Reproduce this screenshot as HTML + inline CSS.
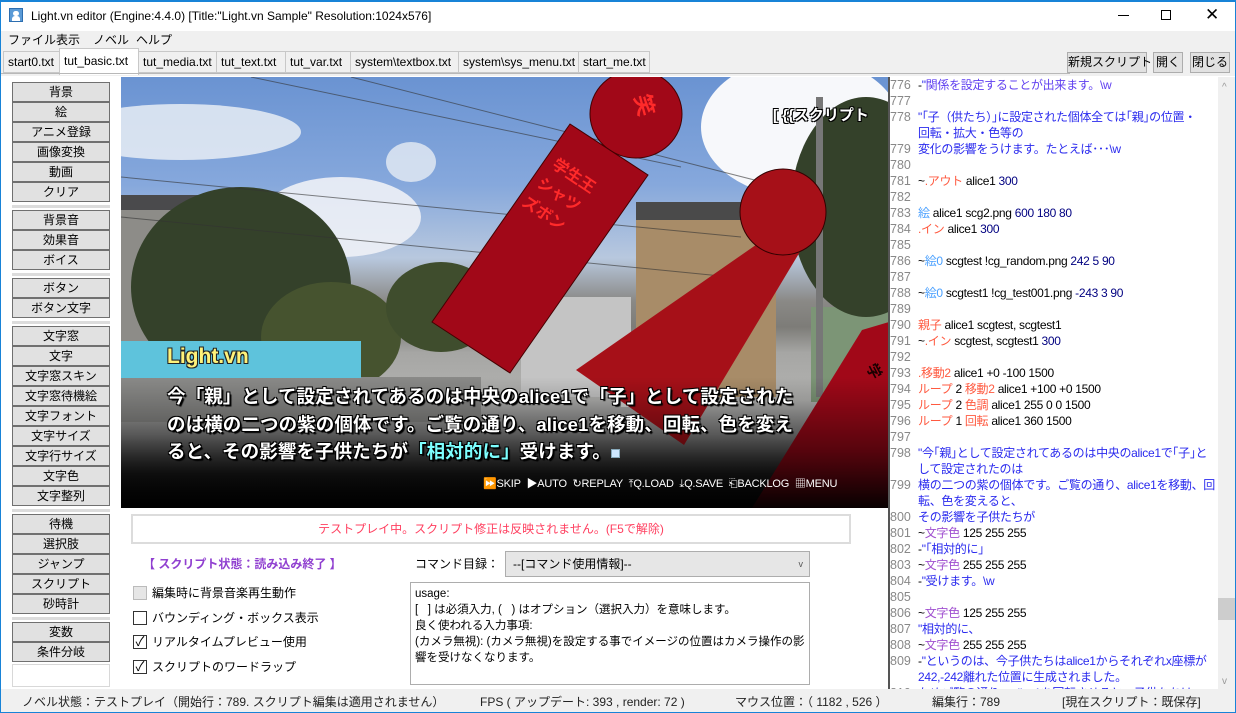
<!DOCTYPE html>
<html><head><meta charset="utf-8"><style>
*{margin:0;padding:0;box-sizing:border-box}
body{width:1236px;height:713px;overflow:hidden;background:#fff;font-family:"Liberation Sans","Noto Sans CJK JP",sans-serif;font-size:12px;color:#000;position:relative}
.a{position:absolute;white-space:nowrap}
.tab{position:absolute;top:51px;height:22px;background:#f0f0f0;border:1px solid #c8c8c8;font-size:12px;line-height:20px;padding-left:4px;color:#000}
.btn{position:absolute;left:12px;width:98px;height:20px;background:#e1e1e1;border:1px solid #707070;text-align:center;font-size:12px;line-height:18px}
.sep{position:absolute;left:12px;width:98px;height:3px;background:#dcdcdc}
.sl{position:absolute;left:889px;width:329px;height:16px;font-size:12px;line-height:16px;white-space:nowrap;overflow:hidden;color:#2a2aee;letter-spacing:-0.3px}
.sl b{font-weight:normal;color:#888;display:inline-block;width:29px;padding-left:1px;font-size:12.5px;letter-spacing:0}
.k{color:#4aa0ff}.r{color:#ff5a40}.n{color:#000}.p{color:#a050d0}.nv{color:#000080}
.cb{position:absolute;left:133px;width:14px;height:14px;border:1px solid #333;background:#fff;font-size:13px;line-height:12px;text-align:center}
.gt{position:absolute;left:167px;color:#fff;font-weight:bold;font-size:18.5px;letter-spacing:0.1px;white-space:nowrap;text-shadow:1px 1px 0 #000,-1px -1px 0 #000,1px -1px 0 #000,-1px 1px 0 #000,2px 2px 1px #000}
</style></head><body>
<div class="a" style="left:0;top:0;width:1236px;height:713px;border:1px solid #1883d7;border-top:2px solid #1883d7"></div>
<div class="a" style="left:9px;top:8px;width:14px;height:14px;background:#5a9ad6;border:1px solid #2d6eb0"><div style="position:absolute;left:3px;top:2px;width:6px;height:5px;background:#fff;border-radius:3px"></div><div style="position:absolute;left:2px;top:7px;width:8px;height:5px;background:#fff;border-radius:3px 3px 0 0"></div></div>
<div class="a" style="left:31px;top:7px;font-size:12px;line-height:18px">Light.vn editor (Engine:4.4.0) [Title:"Light.vn Sample" Resolution:1024x576]</div>
<div class="a" style="left:1118px;top:15px;width:11px;height:1px;background:#000"></div>
<div class="a" style="left:1161px;top:10px;width:10px;height:10px;border:1px solid #000"></div>
<div class="a" style="left:1205px;top:6px;font-size:17px;line-height:18px;font-weight:300">✕</div>
<div class="a" style="left:1px;top:31px;width:1234px;height:19px;background:#f0f0f0"></div>
<div class="a" style="left:8px;top:32px;line-height:17px">ファイル</div>
<div class="a" style="left:56px;top:32px;line-height:17px">表示</div>
<div class="a" style="left:93px;top:32px;line-height:17px">ノベル</div>
<div class="a" style="left:136px;top:32px;line-height:17px">ヘルプ</div>
<div class="a" style="left:1px;top:50px;width:1234px;height:27px;background:#f0f0f0"></div>
<div class="tab" style="left:3px;width:57px">start0.txt</div>
<div class="tab" style="left:138px;width:79px">tut_media.txt</div>
<div class="tab" style="left:216px;width:70px">tut_text.txt</div>
<div class="tab" style="left:285px;width:66px">tut_var.txt</div>
<div class="tab" style="left:350px;width:109px">system\textbox.txt</div>
<div class="tab" style="left:458px;width:121px">system\sys_menu.txt</div>
<div class="tab" style="left:578px;width:72px">start_me.txt</div>
<div class="tab" style="left:59px;top:48px;height:27px;width:80px;background:#fff;line-height:24px;border-bottom:none">tut_basic.txt</div>
<div class="a" style="left:1px;top:73px;width:1069px;height:1px;background:#b8b8b8"></div>
<div class="a" style="left:1px;top:76px;width:1234px;height:613px;background:#fff"></div>
<div class="a" style="left:1067px;top:52px;width:80px;height:21px;background:#e1e1e1;border:1px solid #adadad;text-align:center;line-height:19px">新規スクリプト</div>
<div class="a" style="left:1153px;top:52px;width:30px;height:21px;background:#e1e1e1;border:1px solid #adadad;text-align:center;line-height:19px">開く</div>
<div class="a" style="left:1190px;top:52px;width:40px;height:21px;background:#e1e1e1;border:1px solid #adadad;text-align:center;line-height:19px">閉じる</div>
<div class="btn" style="top:82px">背景</div><div class="btn" style="top:102px">絵</div><div class="btn" style="top:122px">アニメ登録</div><div class="btn" style="top:142px">画像変換</div><div class="btn" style="top:162px">動画</div><div class="btn" style="top:182px">クリア</div>
<div class="sep" style="top:205px"></div>
<div class="btn" style="top:210px">背景音</div><div class="btn" style="top:230px">効果音</div><div class="btn" style="top:250px">ボイス</div>
<div class="sep" style="top:273px"></div>
<div class="btn" style="top:278px">ボタン</div><div class="btn" style="top:298px">ボタン文字</div>
<div class="sep" style="top:321px"></div>
<div class="btn" style="top:326px">文字窓</div><div class="btn" style="top:346px">文字</div><div class="btn" style="top:366px">文字窓スキン</div><div class="btn" style="top:386px">文字窓待機絵</div><div class="btn" style="top:406px">文字フォント</div><div class="btn" style="top:426px">文字サイズ</div><div class="btn" style="top:446px">文字行サイズ</div><div class="btn" style="top:466px">文字色</div><div class="btn" style="top:486px">文字整列</div>
<div class="sep" style="top:509px"></div>
<div class="btn" style="top:514px">待機</div><div class="btn" style="top:534px">選択肢</div><div class="btn" style="top:554px">ジャンプ</div><div class="btn" style="top:574px">スクリプト</div><div class="btn" style="top:594px">砂時計</div>
<div class="sep" style="top:617px"></div>
<div class="btn" style="top:622px">変数</div><div class="btn" style="top:642px">条件分岐</div>
<div class="a" style="left:12px;top:664px;width:98px;height:23px;border:1px solid #d8d8d8"></div>
<!-- game view -->
<div class="a" style="left:121px;top:77px;width:768px;height:431px;overflow:hidden;background:linear-gradient(180deg,#6a93d2 0%,#86a8dc 25%,#b8c8de 42%,#8a8986 52%,#7d7c78 58%,#a6a6a4 64%,#b3b3b1 75%,#8a8a8a 83%,#2a2a2a 92%,#0a0a0a 100%)">
<svg width="768" height="431" style="position:absolute;left:0;top:0">
<defs><linearGradient id="g" x1="0" y1="0" x2="0" y2="1"><stop offset="0" stop-color="#000" stop-opacity="0"/><stop offset=".55" stop-color="#000" stop-opacity=".45"/><stop offset="1" stop-color="#000" stop-opacity=".95"/></linearGradient></defs>
<ellipse cx="60" cy="55" rx="120" ry="28" fill="#e8edf5" opacity=".85"/>
<ellipse cx="220" cy="140" rx="80" ry="40" fill="#eef1f6" opacity=".9"/>
<ellipse cx="290" cy="85" rx="25" ry="20" fill="#e6ecf4" opacity=".8"/>
<ellipse cx="680" cy="50" rx="100" ry="70" fill="#f7f8fb"/>
<rect x="0" y="125" width="110" height="170" fill="#8d8c88"/>
<rect x="0" y="118" width="80" height="15" fill="#4a4a4c"/>
<rect x="400" y="220" width="110" height="100" fill="#c4c4c4"/>
<rect x="515" y="130" width="140" height="190" fill="#a88c68"/>
<rect x="515" y="125" width="120" height="18" fill="#4a4a4a"/>
<rect x="690" y="230" width="78" height="95" fill="#7c9576"/>
<ellipse cx="120" cy="210" rx="110" ry="100" fill="#34412a"/>
<ellipse cx="210" cy="260" rx="70" ry="55" fill="#46532f"/>
<ellipse cx="320" cy="230" rx="55" ry="45" fill="#3f4d2d"/>
<ellipse cx="745" cy="130" rx="75" ry="110" fill="#34412a"/>
<rect x="0" y="300" width="360" height="45" fill="#8a8a88"/>
<rect x="500" y="280" width="50" height="50" fill="#d8d8d6"/>
<path d="M0 100 L620 160 M0 140 L610 200 M230 0 L700 120 M130 0 L560 90" stroke="#333" stroke-width="1" opacity=".6"/>
<rect x="695" y="20" width="7" height="300" fill="#777"/>
<ellipse cx="515" cy="37" rx="46" ry="44" fill="#a10818" stroke="#400" stroke-width="1"/>
<text x="516" y="30" transform="rotate(75 516 30)" fill="#ff2a2a" font-size="22" font-weight="bold" text-anchor="middle" font-family="Noto Sans CJK JP">笑</text>
<polygon points="449,47 527,98 389,296 311,245" fill="#a10818" stroke="#400" stroke-width="1"/>
<g transform="translate(445,100) rotate(34)" fill="#ff2a2a" font-size="16" font-weight="bold" font-family="Noto Sans CJK JP"><text x="-18" y="0">学生王</text><text x="-20" y="24">シャツ</text><text x="-22" y="48">ズボン</text></g>
<polygon points="642,163 683,168 563,368 455,293" fill="#a61018"/>
<circle cx="662" cy="135" r="43" fill="#a61018" stroke="#300" stroke-width="1"/>
<polygon points="741,253 768,245 768,431 631,431" fill="#a10818"/>
<g transform="translate(745,290) rotate(62)" fill="#1a0000" font-size="15" font-weight="bold" font-family="Noto Sans CJK JP"><text x="0" y="0">学</text><text x="10" y="-20">シャツ</text></g>
<rect x="0" y="300" width="768" height="131" fill="url(#g)"/>
</svg>
<div class="a" style="left:0;top:264px;width:240px;height:37px;background:#5ec3dc"></div>
<div class="a" style="left:46px;top:268px;font-size:21px;font-weight:bold;color:#fff27a;text-shadow:1px 1px 0 #222,-1px -1px 0 #222,1px -1px 0 #222,-1px 1px 0 #222">Light.vn</div>
<div class="a" style="left:652px;top:27px;color:#fff;font-weight:bold;font-size:15px;text-shadow:1px 1px 0 #000,-1px -1px 0 #000,1px -1px 0 #000,-1px 1px 0 #000">[ {{スクリプト</div>
<div class="a" style="left:362px;top:398px;color:#fff;font-size:11px;letter-spacing:-0.2px">⏩SKIP&nbsp;&nbsp;▶AUTO&nbsp;&nbsp;↻REPLAY&nbsp;&nbsp;⤒Q.LOAD&nbsp;&nbsp;⤓Q.SAVE&nbsp;&nbsp;⎗BACKLOG&nbsp;&nbsp;▦MENU</div>
</div>
<div class="gt" style="top:383px">今「親」として設定されてあるのは中央のalice1で「子」として設定された</div>
<div class="gt" style="top:411px">のは横の二つの紫の個体です。ご覧の通り、alice1を移動、回転、色を変え</div>
<div class="gt" style="top:438px">ると、その影響を子供たちが<span style="color:#7dffff">「相対的に」</span>受けます。<span style="display:inline-block;width:9px;height:9px;background:#cfe8ff;border:1px solid #8ab"></span></div>
<!-- bottom panel -->
<div class="a" style="left:131px;top:514px;width:720px;height:30px;border:2px solid #dcdcdc;text-align:center;line-height:26px;color:#ff4060;font-size:12px">テストプレイ中。スクリプト修正は反映されません。(F5で解除)</div>
<div class="a" style="left:143px;top:555px;color:#9040d0;font-weight:bold;font-size:12px">【 スクリプト状態：読み込み終了 】</div>
<div class="cb" style="top:586px;background:#e6e6e6;border-color:#bbb"></div><div class="a" style="left:152px;top:584px">編集時に背景音楽再生動作</div>
<div class="cb" style="top:611px"></div><div class="a" style="left:152px;top:609px">バウンディング・ボックス表示</div>
<div class="cb" style="top:635px">✓</div><div class="a" style="left:152px;top:633px">リアルタイムプレビュー使用</div>
<div class="cb" style="top:660px">✓</div><div class="a" style="left:152px;top:658px">スクリプトのワードラップ</div>
<div class="a" style="left:415px;top:555px">コマンド目録：</div>
<div class="a" style="left:505px;top:551px;width:305px;height:26px;background:#e6e6e6;border:1px solid #adadad;padding-left:7px;line-height:24px">--[コマンド使用情報]--<span style="position:absolute;right:6px;font-size:9px;color:#555">v</span></div>
<div class="a" style="left:410px;top:582px;width:400px;height:103px;border:1px solid #adadad;padding:3px 4px;font-size:11.5px;line-height:16px;white-space:normal;overflow:hidden">usage:<br>[&nbsp;&nbsp; ] は必須入力, (&nbsp;&nbsp; ) はオプション（選択入力）を意味します。<br>良く使われる入力事項:<br>(カメラ無視): (カメラ無視)を設定する事でイメージの位置はカメラ操作の影響を受けなくなります。</div>
<!-- script panel -->
<div class="a" style="left:888px;top:77px;width:2px;height:612px;background:#555"></div>
<div class="a" style="left:1218px;top:77px;width:17px;height:612px;background:#f0f0f0"></div>
<div class="a" style="left:1218px;top:598px;width:17px;height:22px;background:#cdcdcd"></div>
<div class="a" style="left:1222px;top:82px;color:#999;font-size:10px">^</div>
<div class="a" style="left:1222px;top:676px;color:#999;font-size:10px">v</div>
<div class="sl" style="top:77px"><b>776</b><span class="n">-</span>"<span style="color:#6040f0">関係を設定することが出来ます。\w</span></div>
<div class="sl" style="top:93px"><b>777</b></div>
<div class="sl" style="top:109px"><b>778</b>"｢子（供たち）｣に設定された個体全ては｢親｣の位置・</div>
<div class="sl" style="top:125px"><b></b>回転・拡大・色等の</div>
<div class="sl" style="top:141px"><b>779</b>変化の影響をうけます。たとえば･･･\w</div>
<div class="sl" style="top:157px"><b>780</b></div>
<div class="sl" style="top:173px"><b>781</b><span class="n">~</span><span class="r">.アウト</span> <span class="n">alice1</span> <span class="nv">300</span></div>
<div class="sl" style="top:189px"><b>782</b></div>
<div class="sl" style="top:205px"><b>783</b><span class="k">絵</span> <span class="n">alice1 scg2.png</span> <span class="nv">600 180 80</span></div>
<div class="sl" style="top:221px"><b>784</b><span class="r">.イン</span> <span class="n">alice1</span> <span class="nv">300</span></div>
<div class="sl" style="top:237px"><b>785</b></div>
<div class="sl" style="top:253px"><b>786</b><span class="n">~</span><span class="k">絵0</span> <span class="n">scgtest !cg_random.png</span> <span class="nv">242 5 90</span></div>
<div class="sl" style="top:269px"><b>787</b></div>
<div class="sl" style="top:285px"><b>788</b><span class="n">~</span><span class="k">絵0</span> <span class="n">scgtest1 !cg_test001.png</span> <span class="nv">-243 3 90</span></div>
<div class="sl" style="top:301px"><b>789</b></div>
<div class="sl" style="top:317px"><b>790</b><span class="r">親子</span> <span class="n">alice1 scgtest, scgtest1</span></div>
<div class="sl" style="top:333px"><b>791</b><span class="n">~</span><span class="r">.イン</span> <span class="n">scgtest, scgtest1</span> <span class="nv">300</span></div>
<div class="sl" style="top:349px"><b>792</b></div>
<div class="sl" style="top:365px"><b>793</b><span class="r">.移動2</span> <span class="n">alice1 +0 -100 1500</span></div>
<div class="sl" style="top:381px"><b>794</b><span class="r">ループ</span> <span class="n">2</span> <span class="r">移動2</span> <span class="n">alice1 +100 +0 1500</span></div>
<div class="sl" style="top:397px"><b>795</b><span class="r">ループ</span> <span class="n">2</span> <span class="r">色調</span> <span class="n">alice1 255 0 0 1500</span></div>
<div class="sl" style="top:413px"><b>796</b><span class="r">ループ</span> <span class="n">1</span> <span class="r">回転</span> <span class="n">alice1 360 1500</span></div>
<div class="sl" style="top:429px"><b>797</b></div>
<div class="sl" style="top:445px"><b>798</b>"今｢親｣として設定されてあるのは中央のalice1で｢子｣と</div>
<div class="sl" style="top:461px"><b></b>して設定されたのは</div>
<div class="sl" style="top:477px"><b>799</b>横の二つの紫の個体です。ご覧の通り、alice1を移動、回</div>
<div class="sl" style="top:493px"><b></b>転、色を変えると、</div>
<div class="sl" style="top:509px"><b>800</b>その影響を子供たちが</div>
<div class="sl" style="top:525px"><b>801</b><span class="n">~</span><span class="p">文字色</span> <span class="n">125 255 255</span></div>
<div class="sl" style="top:541px"><b>802</b><span class="n">-</span>"｢相対的に｣</div>
<div class="sl" style="top:557px"><b>803</b><span class="n">~</span><span class="p">文字色</span> <span class="n">255 255 255</span></div>
<div class="sl" style="top:573px"><b>804</b><span class="n">-</span>"受けます。\w</div>
<div class="sl" style="top:589px"><b>805</b></div>
<div class="sl" style="top:605px"><b>806</b><span class="n">~</span><span class="p">文字色</span> <span class="n">125 255 255</span></div>
<div class="sl" style="top:621px"><b>807</b>"相対的に、</div>
<div class="sl" style="top:637px"><b>808</b><span class="n">~</span><span class="p">文字色</span> <span class="n">255 255 255</span></div>
<div class="sl" style="top:653px"><b>809</b><span class="n">-</span>"というのは、今子供たちはalice1からそれぞれx座標が</div>
<div class="sl" style="top:669px"><b></b>242,-242離れた位置に生成されました。</div>
<div class="sl" style="top:685px;height:4px"><b>810</b>ためご覧の通り、alice1を回転させると、子供たちは</div>
<!-- status bar -->
<div class="a" style="left:1px;top:689px;width:1234px;height:23px;background:#f0f0f0"></div>
<div class="a" style="left:22px;top:693px;color:#222">ノベル状態：テストプレイ（開始行：789. スクリプト編集は適用されません）</div>
<div class="a" style="left:480px;top:693px;color:#222">FPS ( アップデート: 393 , render: 72 )</div>
<div class="a" style="left:735px;top:693px;color:#222">マウス位置：（ 1182 , 526 ）</div>
<div class="a" style="left:932px;top:693px;color:#222">編集行：789</div>
<div class="a" style="left:1062px;top:693px;color:#222">[現在スクリプト：既保存]</div>
</body></html>
